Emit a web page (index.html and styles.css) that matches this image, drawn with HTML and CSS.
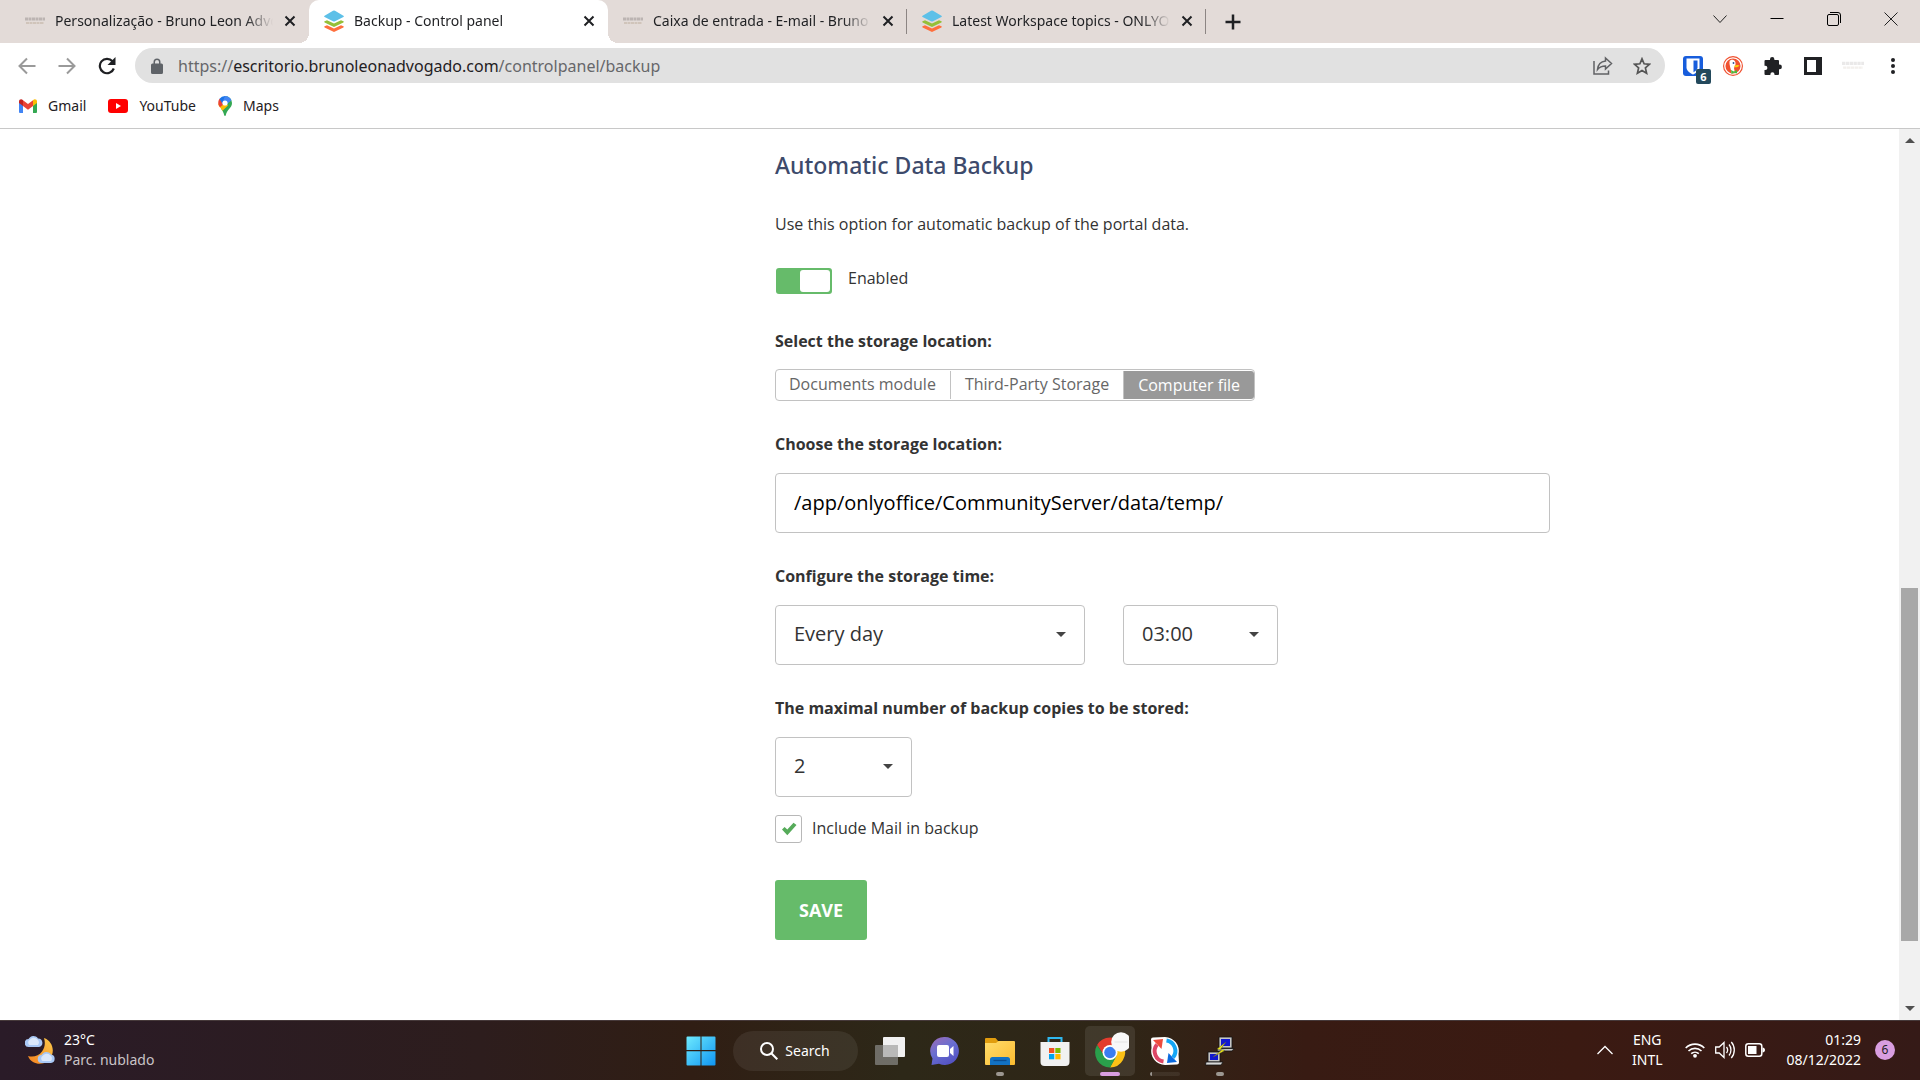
FILE: index.html
```html
<!DOCTYPE html>
<html lang="en">
<head>
    <meta charset="UTF-8">
    <title>Backup - Control panel</title>
    <link rel="stylesheet" href="styles.css">
</head>
<body>
<svg class="defs" width="0" height="0">
    <symbol id="layers" viewBox="0 0 20 22">
        <path fill="#ff6f3d" d="M10 22 .6 17.4c-.5-.3-.5-.8 0-1.100L3 15.200l7 3.400 7-3.400 2.400 1.100c.5.3.5.8 0 1.100z"/>
        <path fill="#95c038" d="M10 17 .6 12.400c-.5-.3-.5-.8 0-1.100L3 10.200l7 3.400 7-3.400 2.400 1.100c.5.3.5.8 0 1.100z"/>
        <path fill="#5dc0e8" d="M9 11.200.6 7c-.6-.3-.6-1 0-1.300L9 .8a2 2 0 0 1 2 0l8.400 4.900c.6.3.6 1 0 1.300L11 11.200a2 2 0 0 1-2 0z"/>
    </symbol>
    <symbol id="cross" viewBox="0 0 14 14">
        <path fill="none" stroke="#1f2023" stroke-width="2" d="M2.500 2.500l9 9M11.500 2.500l-9 9"/>
    </symbol>
    <symbol id="brand" viewBox="0 0 20 8">
        <path stroke="#8d8786" stroke-width="3" stroke-dasharray="3 .5" opacity=".45" d="M0 2h20"/>
        <path stroke="#b5a48f" stroke-width="2" stroke-dasharray="3 .5" opacity=".4" d="M1 6h18"/>
    </symbol>
</svg>

<header class="browser">
    <div class="tabs">
        <div class="tab">
            <svg class="tab-icon"><use href="#brand" width="20" height="22"/></svg>
            <span class="tab-title">Personalização - Bruno Leon Advogado</span>
            <button class="tab-close" aria-label="Close tab"><svg width="14" height="14"><use href="#cross"/></svg></button>
        </div>
        <div class="tab active">
            <svg class="tab-icon"><use href="#layers" width="20" height="22"/></svg>
            <span class="tab-title">Backup - Control panel</span>
            <button class="tab-close" aria-label="Close tab"><svg width="14" height="14"><use href="#cross"/></svg></button>
        </div>
        <div class="tab divided">
            <svg class="tab-icon"><use href="#brand" width="20" height="22"/></svg>
            <span class="tab-title">Caixa de entrada - E-mail - Bruno Leon</span>
            <button class="tab-close" aria-label="Close tab"><svg width="14" height="14"><use href="#cross"/></svg></button>
        </div>
        <div class="tab divided">
            <svg class="tab-icon"><use href="#layers" width="20" height="22"/></svg>
            <span class="tab-title">Latest Workspace topics - ONLYOFFICE</span>
            <button class="tab-close" aria-label="Close tab"><svg width="14" height="14"><use href="#cross"/></svg></button>
        </div>
        <button class="new-tab" aria-label="New tab"><svg width="16" height="16" viewBox="0 0 16 16"><path fill="none" stroke="#1f2023" stroke-width="2.500" d="M8 .5v15M.5 8h15"/></svg></button>
        <div class="window-btns">
            <button aria-label="Search tabs"><svg width="14" height="14" viewBox="0 0 14 14"><path fill="none" stroke="#222" d="M.5 3.500 7 10.500l6.500-7"/></svg></button>
            <button aria-label="Minimize"><svg width="14" height="14" viewBox="0 0 14 14"><path stroke="#000" d="M.5 6.500h13"/></svg></button>
            <button aria-label="Restore"><svg width="14" height="14" viewBox="0 0 14 14"><g fill="none" stroke="#000"><rect x=".5" y="2.500" width="11" height="11" rx="1.500"/><path d="M3 .5h8a2.500 2.500 0 0 1 2.500 2.500v8"/></g></svg></button>
            <button aria-label="Close"><svg width="14" height="14" viewBox="0 0 14 14"><path fill="none" stroke="#222" d="M.5.5l13 13M13.500.5l-13 13"/></svg></button>
        </div>
    </div>

    <div class="toolbar">
        <div class="nav-btns">
            <button aria-label="Back"><svg width="18" height="18" viewBox="0 0 18 18"><path fill="none" stroke="#9a9a9a" stroke-width="2" d="M17.500 9H2.500M9 1.500 1.500 9 9 16.500"/></svg></button>
            <button aria-label="Forward"><svg width="18" height="18" viewBox="0 0 18 18"><path fill="none" stroke="#9a9a9a" stroke-width="2" d="M.5 9h15M9 1.500 16.500 9 9 16.500"/></svg></button>
            <button aria-label="Reload"><svg width="18" height="18" viewBox="0 0 18 18"><path fill="none" stroke="#1f2023" stroke-width="2.200" d="M15.800 11.500A7.200 7.200 0 1 1 14.500 4.300"/><path fill="#1f2023" d="M17.500 0v8h-8z"/></svg></button>
        </div>
        <div class="omnibox">
            <svg width="12" height="16" viewBox="0 0 12 16"><path fill="#5f6368" fill-rule="evenodd" d="M1.500 5.500H2.500V4a3.500 3.500 0 0 1 7 0v1.500h1A1.500 1.500 0 0 1 12 7v7.500a1.500 1.500 0 0 1-1.500 1.500h-9A1.500 1.500 0 0 1 0 14.500V7a1.500 1.500 0 0 1 1.500-1.500zM4 5.500h4V4a2 2 0 0 0-4 0z"/></svg>
            <a class="url" href="#">https://<b>escritorio.brunoleonadvogado.com</b>/controlpanel/backup</a>
            <button aria-label="Share"><svg width="20" height="20" viewBox="0 0 20 20"><g fill="none" stroke="#606164" stroke-width="1.500"><path d="M1 5v13h14.500v-3.500"/><path d="M12.500 2l6 5.500-6 5.500V10c-4 0-6 1-8 3.500.5-5 3.500-8 8-8.500z"/></g></svg></button>
            <button aria-label="Bookmark"><svg width="18" height="18" viewBox="0 0 18 18"><path fill="none" stroke="#555" stroke-width="1.700" d="M9 1.800l2.100 5 5.400.5-4.100 3.600 1.200 5.300L9 13.400l-4.600 2.800 1.200-5.300-4.100-3.600 5.400-.5z"/></svg></button>
        </div>
        <div class="extensions">
            <button aria-label="Bitwarden">
                <svg width="20" height="20" viewBox="0 0 20 20"><rect width="20" height="20" rx="3" fill="#175ddc"/><path fill="#fff" d="M3.500 2.500h13v9c0 3.500-3.500 5.500-6.500 7-3-1.500-6.500-3.500-6.500-7z"/><path fill="#175ddc" d="M10.500 4.500h4v7c0 2-2 3.500-4 4.700z"/></svg>
                <span class="badge">6</span>
            </button>
            <button aria-label="DuckDuckGo"><svg width="20" height="20" viewBox="0 0 20 20"><circle cx="10" cy="10" r="10" fill="#f0502f"/><circle cx="10" cy="10" r="8.200" fill="none" stroke="#fff" stroke-width="1.300"/><path fill="#fff" d="M6.500 5.500C7 3.800 9 3.400 10.500 4c1.700.7 2.300 2.200 2 4.500l-1.500 3.500.8 4.500-3.300.5C8 13 6 8.500 6.500 5.500z"/><circle cx="10.500" cy="7" r=".9" fill="#2d4f8e"/><path fill="#fdd20a" d="M11.500 9.500c2-.6 4-.9 5 0-1 1.500-3 2-5 1.800z"/><path fill="#4cba3c" d="M8 14l3 1.500 3-1.500v3.500l-3-.8L8.500 18z"/></svg></button>
            <button aria-label="Extensions"><svg width="18" height="18" viewBox="0 0 18 18"><path fill="#202124" d="M6 3V2.300a2.200 2.200 0 0 1 4.400 0V3H14a1 1 0 0 1 1 1v3.600h.6a2.300 2.300 0 0 1 0 4.600H15V17a1 1 0 0 1-1 1h-3.500v-.8a2 2 0 0 0-4.100 0v.8H1.500a1 1 0 0 1-1-1v-4h.8a2 2 0 0 0 0-4.200H.5V4a1 1 0 0 1 1-1z"/></svg></button>
            <button aria-label="Side panel"><svg width="18" height="18" viewBox="0 0 18 18"><path fill="#202124" d="M0 0h18v18H0zM3 3v12h9V3z" fill-rule="evenodd"/></svg></button>
            <button aria-label="Profile" class="profile"><svg width="22" height="10"><use href="#brand" width="22" height="9"/></svg></button>
            <button aria-label="Menu"><svg width="4" height="16" viewBox="0 0 4 16"><g fill="#202124"><circle cx="2" cy="2" r="2"/><circle cx="2" cy="8" r="2"/><circle cx="2" cy="14" r="2"/></g></svg></button>
        </div>
    </div>

    <nav class="bookmarks">
        <a href="#">
            <svg width="18" height="14" viewBox="0 0 18 14"><path fill="#4285f4" d="M0 3v9.700C0 13.500.5 14 1.200 14H4V6z"/><path fill="#34a853" d="M14 6v8h2.800c.7 0 1.200-.5 1.200-1.300V3z"/><path fill="#ea4335" d="M4 7V1.200l5 3.800 5-3.800V7l-5 3.700z"/><path fill="#c5221f" d="M0 2.500C0 .5 2.200-.5 3.800.9L4 1.200V7L0 4z"/><path fill="#fbbc04" d="M18 2.500c0-2-2.200-3-3.800-1.600l-.2.3V7l4-3z"/></svg>
            Gmail
        </a>
        <a href="#">
            <svg width="20" height="14" viewBox="0 0 20 14"><rect width="20" height="14" rx="3" fill="#f00"/><path fill="#fff" d="M8 4l5 3-5 3z"/></svg>
            YouTube
        </a>
        <a href="#">
            <svg width="14" height="20" viewBox="0 0 14 20"><path fill="#34a853" d="M7 0a7 7 0 0 1 7 7c0 5-5 6-6.200 12.300-.2.900-1.400.9-1.600 0C5.600 16.300 4.300 14.500 3 12.500z"/><path fill="#fbbc04" d="M3 12.500C1.500 10.700.3 9 .1 7.500L9 8l1 1.500-5.500 5.300z"/><path fill="#ea4335" d="M1.500 2.700 7 7 2 11.200C.5 9.500-.8 6 1.500 2.700z"/><path fill="#1a73e8" d="M1.500 2.700A7 7 0 0 1 7 0l1 4-3.500 4z"/><path fill="#4285f4" d="M7 0c3 0 5.400 1.800 6.400 4.200L8 9 5 5z"/><circle cx="7" cy="7" r="2.600" fill="#fff"/></svg>
            Maps
        </a>
    </nav>
</header>

<div class="viewport">
    <main class="page">
        <form class="backup">
            <h1>Automatic Data Backup</h1>
            <p>Use this option for automatic backup of the portal data.</p>
            <div class="switch-row">
                <input type="checkbox" class="switch" id="enabled" checked>
                <label for="enabled">Enabled</label>
            </div>

            <h2>Select the storage location:</h2>
            <div class="segments">
                <button type="button">Documents module</button>
                <button type="button">Third-Party Storage</button>
                <button type="button" class="selected">Computer file</button>
            </div>

            <label class="title" for="path">Choose the storage location:</label>
            <input type="text" class="field" id="path" value="/app/onlyoffice/CommunityServer/data/temp/">

            <label class="title" for="period">Configure the storage time:</label>
            <div class="selects">
                <div class="select period">
                    <select class="field" id="period"><option>Every day</option></select>
                </div>
                <div class="select hour">
                    <select class="field" aria-label="Hour"><option>03:00</option></select>
                </div>
            </div>

            <label class="title" for="copies">The maximal number of backup copies to be stored:</label>
            <div class="select copies">
                <select class="field" id="copies"><option>2</option></select>
            </div>

            <div class="check-row">
                <span class="check">
                    <input type="checkbox" id="mail" checked>
                    <svg width="16" height="14" viewBox="0 0 16 14"><path fill="#56ab5a" d="M1 7.500 3.600 5l2.700 2.400L12.500.8 15.500 3 6.300 13.300z"/></svg>
                </span>
                <label for="mail">Include Mail in backup</label>
            </div>

            <button type="button" class="save">SAVE</button>
        </form>
    </main>
    <div class="scrollbar">
        <button aria-label="Scroll up"><svg width="10" height="5" viewBox="0 0 10 5"><path fill="#505050" d="M5 0l5 5H0z"/></svg></button>
        <div class="track"><div class="thumb"></div></div>
        <button aria-label="Scroll down"><svg width="10" height="5" viewBox="0 0 10 5"><path fill="#505050" d="M0 0h10L5 5z"/></svg></button>
    </div>
</div>

<footer class="taskbar">
    <div class="weather">
        <svg width="30" height="28" viewBox="0 0 30 28">
            <defs><linearGradient id="moon" x1="0" y1="1" x2="1" y2="0"><stop offset="0" stop-color="#f5821f"/><stop offset="1" stop-color="#fbc94b"/></linearGradient></defs>
            <path fill="url(#moon)" d="M19 2c7 2.500 10.500 10 8 17-3 8-12 11-19 7-2.500-1.500-4-3.500-5-6 5 1.500 11 0 14-4.500 3-4 3.500-9 2-13.500z"/>
            <path fill="#a9c8f5" d="M4 11a4 4 0 0 1-.5-8A5.500 5.500 0 0 1 13 2.500a4.300 4.300 0 0 1 1 8.500z"/>
            <path fill="#dbe8fb" d="M4.500 9a3 3 0 0 1 0-5A5 5 0 0 1 12 3a4 4 0 0 1 1 6z"/>
            <path fill="#a9c8f5" d="M17 27a4 4 0 0 1-.5-8 5.500 5.500 0 0 1 9.500-.5 4.300 4.300 0 0 1 0 8.500z"/>
            <path fill="#dbe8fb" d="M17.500 25a3 3 0 0 1 0-5 5 5 0 0 1 7.500-1 4 4 0 0 1 1 6z"/>
        </svg>
        <div><span>23°C</span><small>Parc. nublado</small></div>
    </div>

    <div class="apps">
        <button class="app" aria-label="Start">
            <svg width="30" height="30" viewBox="0 0 30 30"><defs><linearGradient id="win" x1="0" y1="0" x2="1" y2="1" ><stop offset="0" stop-color="#6eeafd"/><stop offset="1" stop-color="#0f95f3"/></linearGradient></defs><path fill="url(#win)" d="M1.500.5H14.500V14H.5V1.500a1 1 0 0 1 1-1zM15.500.5h13a1 1 0 0 1 1 1V14h-14zM.5 15.200h14v14.300h-13a1 1 0 0 1-1-1zM15.500 15.200h14v13.300a1 1 0 0 1-1 1h-13z"/></svg>
        </button>
        <button class="search">
            <svg width="18" height="18" viewBox="0 0 18 18"><g fill="none" stroke="#fff" stroke-width="2"><circle cx="7" cy="7" r="6"/><path d="M11.300 11.300l6 6"/></g></svg>
            Search
        </button>
        <button class="app" aria-label="Task view">
            <svg width="30" height="30" viewBox="0 0 30 30"><rect x="8" y="1" width="22" height="20" rx="1" fill="#f1f1f1"/><rect y="9" width="23" height="20" rx="1" fill="#8b8b89" opacity=".7"/><path fill="#b9b9b8" d="M8 9h15v12H8z"/></svg>
        </button>
        <button class="app" aria-label="Chat">
            <svg width="30" height="30" viewBox="0 0 30 30"><defs><linearGradient id="chat" x1="0" y1="0" x2=".6" y2="1"><stop offset="0" stop-color="#a06ab5"/><stop offset=".5" stop-color="#6a6fd0"/><stop offset="1" stop-color="#5453c4"/></linearGradient></defs><path fill="url(#chat)" d="M15 1a14 14 0 1 1-6 26.700L1.500 29l1-6.500A14 14 0 0 1 15 1z"/><rect x="7" y="9" width="12" height="12" rx="2" fill="#fff"/><path fill="#fff" d="M20 13l3.500-3v10L20 17z"/></svg>
        </button>
        <button class="app running" aria-label="File Explorer">
            <svg width="30" height="30" viewBox="0 0 30 30"><defs><linearGradient id="dir" x1="0" y1="0" x2="1" y2="1"><stop offset="0" stop-color="#ffdc6b"/><stop offset="1" stop-color="#fcbc30"/></linearGradient></defs><path fill="#e19d0e" d="M1 2h9.500l3 3.500V10H0V3a1 1 0 0 1 1-1z"/><path fill="url(#dir)" d="M0 7h11l2.500-2H29a1 1 0 0 1 1 1v22a1 1 0 0 1-1 1H1a1 1 0 0 1-1-1z"/><path fill="#1272c4" d="M5 29v-5.500A2.500 2.500 0 0 1 7.500 21h15a2.500 2.500 0 0 1 2.500 2.500V29z"/><path stroke="#0b4d91" stroke-width="1.300" d="M8.500 24.500h13"/></svg>
        </button>
        <button class="app" aria-label="Microsoft Store">
            <svg width="30" height="30" viewBox="0 0 30 30"><path fill="none" stroke="#2fb8ef" stroke-width="2" d="M8.500 7V2h13v5"/><path fill="#f1f1f1" d="M.5 6h29v20a4 4 0 0 1-4 4h-21a4 4 0 0 1-4-4z"/><path fill="#f25022" d="M9 12h5.300v5H9z"/><path fill="#7fba00" d="M15.300 12h5.200v5h-5.200z"/><path fill="#00a4ef" d="M9 18h5.300v5.300H9z"/><path fill="#ffb900" d="M15.300 18h5.200v5.300h-5.200z"/></svg>
        </button>
        <button class="app running current" aria-label="Chrome">
            <svg width="38" height="38" viewBox="0 0 38 38"><path fill="#e33b2e" d="M6.100 13a15 15 0 0 1 26 0H19l-6 10.500z"/><path fill="#fbc116" d="M32 13a15 15 0 0 1-13 22.500l6.500-12L19 13z"/><path fill="#2a9f4b" d="M6.100 13A15 15 0 0 0 19 35.500l6.300-11-12.300-1z"/><circle cx="19" cy="20.500" r="7.500" fill="#fff"/><circle cx="19" cy="20.500" r="5.800" fill="#3a7df0"/><circle cx="30" cy="10" r="9.800" fill="#f8f8f8"/><path stroke="#e4e4e4" d="M23.500 10h13"/></svg>
        </button>
        <button class="app loading" aria-label="Sync">
            <svg width="30" height="30" viewBox="0 0 30 30"><path fill="#fff" d="M3 1.500 15 1A14 14 0 0 1 28.500 18l.5 8.500a2 2 0 0 1-2 2L15 29A14 14 0 0 1 1.500 12L1 3.500a2 2 0 0 1 2-2z"/><path fill="none" stroke="#dd4766" stroke-width="4" d="M13.500 25.500A10.500 10.500 0 0 1 7 8.500"/><path fill="#ee4b3c" d="M3 4l10-1-1.500 10z"/><path fill="none" stroke="#14a6f6" stroke-width="4" d="M16.500 4.500A10.500 10.500 0 0 1 23 21.500"/><path fill="#0a6be0" d="M27 26l-10 1 1.500-10z"/></svg>
        </button>
        <button class="app running" aria-label="PuTTY">
            <svg width="30" height="30" viewBox="0 0 30 30"><g stroke="#111" stroke-width=".8"><path fill="#c6c6c6" d="M14 1h13v11H14z"/><path fill="#c6c6c6" d="M13 12.500h16l-2 2.500H12z"/><path fill="#c6c6c6" d="M3 16h12v10H3z"/><path fill="#d8d8d8" d="M1 26h17l-2 3H.5z"/></g><path fill="#1016d0" d="M16 3h9v7h-9zM5 18h8v6H5z"/><path fill="#f4ee13" stroke="#554" stroke-width=".5" d="M21 6l-9 7 4.500 1.200L8 21l12-6.500-4.500-1.200z"/></svg>
        </button>
    </div>

    <div class="tray">
        <button aria-label="Hidden icons"><svg width="16" height="10" viewBox="0 0 16 10"><path fill="none" stroke="#fff" stroke-width="1.300" d="M.5 9 8 1.500 15.500 9"/></svg></button>
        <button class="lang">ENG<br>INTL</button>
        <button class="status" aria-label="Network, sound and battery">
            <svg width="20" height="16" viewBox="0 0 20 16"><g fill="none" stroke="#fff" stroke-width="1.600"><path d="M.7 6a13 13 0 0 1 18.600 0M3.500 9a9.300 9.300 0 0 1 13 0M6.200 11.700a5.500 5.500 0 0 1 7.600 0"/></g><circle cx="10" cy="13.800" r="1.900" fill="#fff"/></svg>
            <svg width="20" height="18" viewBox="0 0 20 18"><g fill="none" stroke="#fff" stroke-width="1.300"><path d="M.7 6h3.500L9 1.500v15L4.200 12H.7z"/><path d="M11.500 6c1.300 1.700 1.300 4.300 0 6M14 3.500c2.600 3 2.600 8 0 11M16.300 1c4 4.500 4 11.500 0 16"/></g></svg>
            <svg width="20" height="14" viewBox="0 0 20 14"><rect x=".8" y=".8" width="16" height="12.400" rx="2.500" fill="none" stroke="#fff" stroke-width="1.500"/><path fill="#fff" d="M3 3h8.500v8H3zM17.500 4.500c1.500 0 2.500 1 2.500 2.500s-1 2.500-2.500 2.500z"/></svg>
        </button>
        <button class="clock">01:29<br>08/12/2022</button>
        <span class="count">6</span>
    </div>
</footer>
</body>
</html>
```
FILE: styles.css
```css
*{
    box-sizing: border-box;
}
body{
    margin: 0;
    height: 100vh;
    display: flex;
    flex-direction: column;
    background-color: #fff;
    font-family: "Open Sans", sans-serif;
    font-size: 16px;
    line-height: 24px;
    color: #333;
}
button{
    margin: 0;
    padding: 0;
    border: 0;
    background: none;
    font: inherit;
    color: inherit;
}
a{
    color: inherit;
    text-decoration: none;
}
svg{
    display: block;
    flex: none;
}
.defs{
    position: absolute;
}

/* browser */
.browser{
    font-family: "Segoe UI", "Noto Sans", sans-serif;
    font-size: 14px;
    line-height: 20px;
    color: #1f2023;
    border-bottom: 1px solid #c8c8c8;
}
.tabs{
    display: flex;
    align-items: stretch;
    height: 43px;
    padding-left: 10px;
    background-color: #e3dbd8;
}
.tab{
    display: flex;
    align-items: center;
    gap: 10px;
    width: 299px;
    padding: 0 12px 2px 15px;
    position: relative;
}
.tab.active{
    background-color: #fff;
    border-radius: 10px 10px 0 0;
}
.tab.active::before,
.tab.active::after{
    content: "";
    position: absolute;
    bottom: 0;
    width: 10px;
    height: 10px;
}
.tab.active::before{
    right: 100%;
    background: radial-gradient(circle at 0 0, transparent 10px, #fff 10px);
}
.tab.active::after{
    left: 100%;
    background: radial-gradient(circle at 100% 0, transparent 10px, #fff 10px);
}
.tab.divided::after{
    content: "";
    position: absolute;
    right: 0;
    top: 9px;
    width: 1px;
    height: 25px;
    background-color: #8c8583;
}
.tab-icon{
    width: 20px;
    height: 22px;
}
.tab-title{
    flex: 1;
    min-width: 0;
    overflow: hidden;
    white-space: nowrap;
    -webkit-mask-image: linear-gradient(to right, #000 calc(100% - 28px), transparent);
    mask-image: linear-gradient(to right, #000 calc(100% - 28px), transparent);
}
.new-tab{
    padding: 0 19px;
}
.window-btns{
    display: flex;
    margin-left: auto;
    padding-right: 1px;
}
.window-btns button{
    display: flex;
    justify-content: center;
    align-items: center;
    width: 57px;
    padding-bottom: 6px;
}
.toolbar{
    display: flex;
    align-items: center;
    height: 45px;
    padding: 0 7px;
}
.nav-btns,
.extensions{
    display: flex;
}
.nav-btns button,
.extensions button{
    display: flex;
    justify-content: center;
    align-items: center;
    width: 40px;
    height: 36px;
    position: relative;
}
.nav-btns{
    margin-right: 8px;
}
.extensions{
    margin-left: 8px;
}
.omnibox{
    flex: 1;
    display: flex;
    align-items: center;
    gap: 20px;
    height: 35px;
    padding: 0 14px 0 16px;
    border-radius: 18px;
    background-color: #e1e1e1;
}
.url{
    flex: 1;
    margin-left: -5px;
    font-size: 16px;
    color: #66676a;
}
.url b{
    font-weight: 400;
    color: #1f2023;
}
.badge{
    position: absolute;
    right: 2px;
    bottom: 0;
    width: 15px;
    height: 15px;
    border-radius: 2px;
    background-color: #23495c;
    font-size: 11px;
    font-weight: 700;
    line-height: 15px;
    color: #fff;
}
.profile{
    opacity: .4;
}
.bookmarks{
    display: flex;
    gap: 22px;
    height: 40px;
    padding: 0 19px 4px;
}
.bookmarks a{
    display: flex;
    align-items: center;
    gap: 11px;
}

/* page */
.viewport{
    flex: 1;
    min-height: 0;
    display: flex;
}
.page{
    flex: 1;
    overflow: hidden;
    padding: 20px 349px 40px 775px;
}
.backup{
    display: flex;
    flex-direction: column;
    align-items: flex-start;
}
h1{
    margin: 0 0 31px;
    font-family: "Noto Sans", "Open Sans", sans-serif;
    font-size: 23px;
    font-weight: 500;
    line-height: 32px;
    color: #3d4a6b;
}
p{
    margin: 0 0 30px;
}
.switch-row{
    display: flex;
    gap: 16px;
    padding-left: 1px;
}
.switch{
    appearance: none;
    width: 56px;
    height: 26px;
    margin: 2px 0 0;
    padding: 2px;
    border-radius: 3px;
    background-color: #66bb6a;
}
.switch:checked::before{
    content: "";
    display: block;
    width: 30px;
    height: 22px;
    margin-left: auto;
    border-radius: 3px;
    background-color: #fff;
}
h2,
.title{
    margin: 31px 0 17px;
    font-size: 16px;
    font-weight: 700;
    line-height: 24px;
}
h2{
    margin: 35px 0 16px;
}
.segments{
    display: flex;
    border: 1px solid #c2c2c2;
    border-radius: 4px;
    padding: 1px 0;
    color: #666;
}
.segments button{
    height: 28px;
    padding: 0 14px 2px 13px;
}
.segments button + button{
    padding-left: 14px;
    border-left: 1px solid #c2c2c2;
}
.segments .selected{
    padding-bottom: 0;
    border-radius: 0 3px 3px 0;
    background-color: #999;
    color: #fff;
}
.field{
    display: block;
    width: 100%;
    height: 60px;
    padding: 0 18px 2px;
    border: 1px solid #c2c2c2;
    border-radius: 4px;
    background-color: #fff;
    font: 20px "Open Sans", sans-serif;
    color: #000;
}
.selects{
    display: flex;
    gap: 38px;
}
.select{
    position: relative;
}
.select .field{
    appearance: none;
    padding-bottom: 4px;
    color: #333;
}
.select::after{
    content: "";
    position: absolute;
    right: 19px;
    top: 27px;
    border: 5px solid transparent;
    border-top-color: #444;
    border-bottom: 0;
}
.period{
    width: 310px;
}
.hour{
    width: 155px;
}
.copies{
    width: 137px;
}
.check-row{
    display: flex;
    align-items: center;
    gap: 10px;
    margin: 18px 0 37px;
}
.check{
    display: grid;
    place-items: center;
}
.check > *{
    grid-area: 1 / 1;
}
.check input{
    appearance: none;
    width: 27px;
    height: 28px;
    margin: 0;
    border: 1px solid #b8b8b8;
    border-radius: 3px;
}
.check svg{
    pointer-events: none;
}
.check-row label{
    padding-bottom: 2px;
}
.save{
    height: 60px;
    padding: 0 24px;
    border-radius: 3px;
    background-color: #66bb6a;
    font-size: 18px;
    font-weight: 700;
    color: #fff;
}
.scrollbar{
    display: flex;
    flex-direction: column;
    width: 21px;
    background-color: #f1f1f1;
}
.scrollbar button{
    display: flex;
    justify-content: center;
    align-items: center;
    height: 23px;
}
.track{
    flex: 1;
    display: flex;
    flex-direction: column;
    justify-content: flex-end;
    padding: 0 2px;
}
.track::after{
    content: "";
    height: 6.6%;
}
.thumb{
    height: 41.8%;
    background-color: #a8a8a8;
}

/* taskbar */
.taskbar{
    display: grid;
    grid-template-columns: 1fr auto 1fr;
    height: 60px;
    border-top: 1px solid #46393a;
    background: linear-gradient(to right, #2a1b28, #2d1d1d 25%, #301e14 36%, #2d2818 47%, #2f2617 58%, #381b13 68%, #3b1a12 82%, #351a17);
    font-family: "Segoe UI", "Noto Sans", sans-serif;
    font-size: 14px;
    line-height: 20px;
    color: #fff;
}
.weather{
    display: flex;
    align-items: center;
    gap: 9px;
    padding: 0 0 2px 25px;
}
.weather span,
.weather small{
    display: block;
    font-size: 14px;
}
.weather small{
    color: #c9c3c7;
}
.apps{
    display: flex;
    align-items: center;
    gap: 5px;
}
.app{
    display: flex;
    justify-content: center;
    align-items: center;
    width: 50px;
    height: 50px;
    position: relative;
}
.search{
    display: flex;
    justify-content: center;
    align-items: center;
    gap: 7px;
    width: 125px;
    height: 40px;
    margin: 0 2px;
    border-radius: 20px;
    background-color: rgba(255,255,255,.07);
}
.running::after,
.loading::after{
    content: "";
    position: absolute;
    left: 21px;
    bottom: 0;
    width: 8px;
    height: 4px;
    border-radius: 2px;
    background-color: #9c9791;
}
.current{
    border-radius: 5px;
    background-color: rgba(255,255,255,.09);
}
.current::after{
    left: 15px;
    width: 20px;
    background-color: #d99ee0;
}
.loading::after{
    left: 10px;
    width: 30px;
    background: linear-gradient(to right, #9c9791 2px, rgba(255,255,255,.07) 2px);
}
.tray{
    display: flex;
    justify-content: flex-end;
    align-items: center;
    padding: 0 25px 2px 0;
}
.lang{
    margin-left: 19px;
}
.status{
    display: flex;
    align-items: center;
    gap: 10px;
    margin: 0 22px;
}
.clock{
    text-align: right;
}
.count{
    width: 20px;
    height: 20px;
    margin-left: 14px;
    border-radius: 10px;
    background-color: #d99ee0;
    font-size: 12px;
    text-align: center;
    color: #222;
}
```
